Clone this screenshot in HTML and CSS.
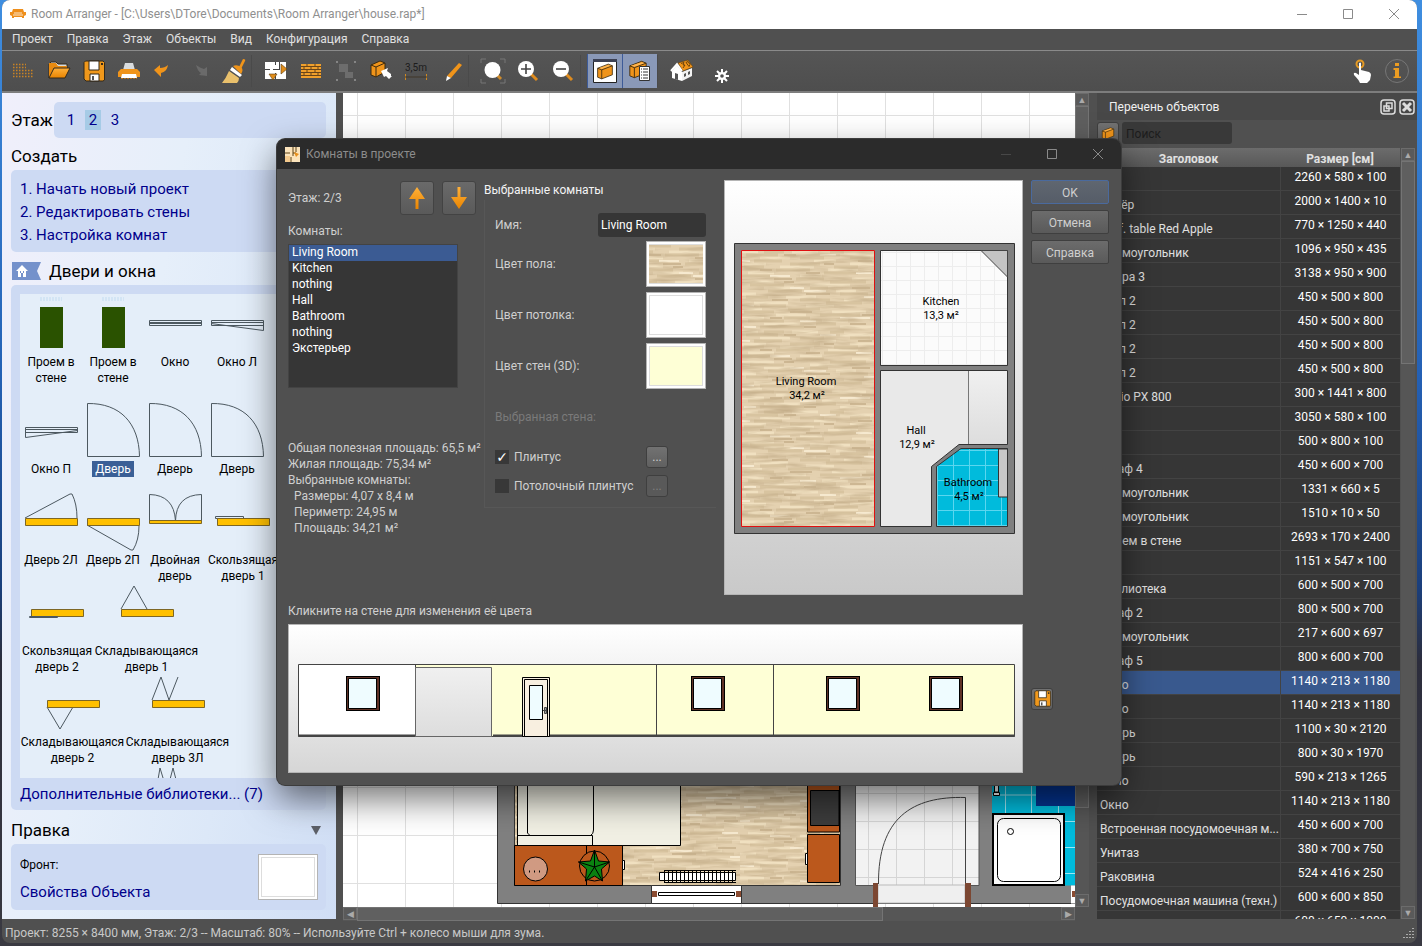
FILE: index.html
```html
<!DOCTYPE html>
<html lang="ru">
<head>
  <meta charset="UTF-8">
  <meta name="viewport" content="width=device-width, initial-scale=1.0">
  <title>Room Arranger</title>
  <link rel="stylesheet" href="styles.css">
</head>
<body>
  <!-- shared patterns and icons -->
  <svg class="defs" width="0" height="0" aria-hidden="true">
    <defs>
      <pattern id="parquet" width="134" height="80" patternUnits="userSpaceOnUse" patternTransform="translate(740 250)">
        <rect width="134" height="80" fill="#e4d1b0"/>
        <g fill="none" stroke-width="3">
          <path stroke="#f0e0c0" d="M0 2h18M52 2h26M100 5h34M20 8h30M74 11h22M0 14h26M110 14h24M40 17h34M88 20h30M8 23h26M60 26h22M112 29h22M0 32h34M70 35h40M24 38h30M96 41h20M0 44h16M46 47h30M104 50h30M14 53h34M66 56h28M0 59h22M92 62h34M36 65h30M0 68h24M82 71h26M24 74h36M100 77h34"/>
          <path stroke="#d8c4a0" d="M24 2h20M90 2h14M6 5h32M60 8h24M110 8h20M14 11h28M50 14h30M4 17h20M94 17h24M36 20h34M84 23h34M0 26h30M56 29h28M90 32h36M10 35h34M70 38h18M28 41h34M100 44h28M6 47h22M60 50h30M86 53h36M20 56h26M48 59h32M4 62h30M80 65h40M44 68h26M8 71h36M76 74h20M20 77h44"/>
          <path stroke="#cdb793" stroke-width="2" d="M44 5h12M118 11h14M84 14h10M20 20h12M66 23h14M34 29h18M44 32h10M112 38h18M66 44h24M32 50h16M50 62h22M122 65h12M30 68h12M110 74h16M64 77h12"/>
          <path stroke="#f6e9cf" stroke-width="2" d="M80 5h16M0 11h10M30 26h20M116 23h16M50 38h14M64 41h22M124 47h10M0 56h14M100 68h30M60 71h16M4 77h12"/>
        </g>
      </pattern>
      <filter id="grain" x="0" y="0" width="1" height="1">
        <feTurbulence type="fractalNoise" baseFrequency=".025 .22" numOctaves="3" seed="4"/>
        <feColorMatrix values="0 0 0 0 .56  0 0 0 0 .43  0 0 0 0 .26  2.200 0 0 0 -.95"/>
      </filter>
      <pattern id="tiles" width="28" height="28" patternUnits="userSpaceOnUse" patternTransform="translate(868 821)">
        <path d="M0 .5h28M.5 0v28" stroke="#d5d5d5" fill="none"/>
      </pattern>
      <pattern id="fineTiles" width="14" height="14" patternUnits="userSpaceOnUse" patternTransform="translate(882 252)">
        <path d="M0 .5h14M.5 0v14" stroke="#ededed" fill="none"/>
      </pattern>
      <pattern id="blueTiles" width="16" height="15" patternUnits="userSpaceOnUse" patternTransform="translate(937 450)">
        <path d="M0 .5h16M.5 0v15" stroke="#5ad6ef" fill="none"/>
      </pattern>
      <pattern id="paper" width="48" height="48" patternUnits="userSpaceOnUse" patternTransform="translate(357 115)">
        <path d="M0 .5h48M.5 0v48" stroke="#e0e0e0" fill="none"/>
      </pattern>
      <linearGradient id="fade" x1="0" y1="0" x2="0" y2="1">
        <stop offset="0" stop-color="#f0f0f0"/><stop offset="1" stop-color="#dddddd"/>
      </linearGradient>
      <linearGradient id="orange" x1="0" y1="0" x2="0" y2="1">
        <stop offset="0" stop-color="#ffb13a"/><stop offset="1" stop-color="#e98400"/>
      </linearGradient>
      <symbol id="floppy" viewBox="0 0 22 22">
        <path d="M1 2.500 2.500 1H20l1.500 1.500V20L20 21H3l-2-2z" fill="#f0981b" stroke="#33291a"/>
        <path d="M6 1h10v9H6z" fill="#fff" stroke="#33291a"/>
        <path d="M7 14h9v7H7z" fill="#fff" stroke="#33291a"/>
        <path d="M9 16h2v4H9z" fill="#555"/><path d="M18 3h2v2h-2z" fill="#33291a"/>
      </symbol>
      <symbol id="box" viewBox="0 0 22 20">
        <path d="M2 6 15 1l5 2v11L7 19l-5-2z" fill="#f0941a" stroke="#3b2a10"/>
        <path d="M3 6 15 2l4 1.200L7 7z" fill="#ffb650"/>
        <path d="M2 6l5 2 13-5M7 8v11" fill="none" stroke="#3b2a10"/>
      </symbol>
      <symbol id="pane" viewBox="0 0 34 35">
        <path d="M0 0h34v35H0z" fill="#000"/><path d="M1 1h32v33H1z" fill="#5f3126"/>
        <path d="M2.500 2.500h28v30h-28z" fill="#effcff" stroke="#000"/>
      </symbol>
    </defs>
  </svg>

  <div class="app">
    <header class="titlebar">
      <svg class="app-icon" width="16" height="12" viewBox="0 0 16 12"><path d="M3 1h10l1 3h2v3l-2 1v2h-2V9H4v1H2V8L0 7V4h2z" fill="#ee8f1c"/><path d="M4 5h8M3 7h10" stroke="#fff" stroke-width=".8"/></svg>
      <span class="title">Room Arranger - [C:\Users\DTore\Documents\Room Arranger\house.rap*]</span>
      <div class="window-controls">
        <button aria-label="Свернуть"><svg width="12" height="12" viewBox="0 0 12 12"><path d="M1 6.500h10"/></svg></button>
        <button aria-label="Развернуть"><svg width="12" height="12" viewBox="0 0 12 12"><path d="M1.500 1.500h9v9h-9z"/></svg></button>
        <button aria-label="Закрыть"><svg width="12" height="12" viewBox="0 0 12 12"><path d="M1 1l10 10M11 1 1 11"/></svg></button>
      </div>
    </header>

    <nav class="menubar">
      <button>Проект</button>
      <button>Правка</button>
      <button>Этаж</button>
      <button>Объекты</button>
      <button>Вид</button>
      <button>Конфигурация</button>
      <button>Справка</button>
    </nav>

    <div class="toolbar">
      <button class="tool" aria-label="Новый"><svg width="24" height="20" viewBox="0 0 24 20"><path d="M1 3.500h13M1 6.500h13M1 9.500h21M1 12.500h21M1 15.500h21" stroke="#c98324" stroke-width="1.500" stroke-dasharray="1.500 1.500"/></svg></button>
      <button class="tool" aria-label="Открыть"><svg width="24" height="20" viewBox="0 0 24 20"><path d="M2 17V3l2-2h5l2 2h9v4" fill="#d8dde0" stroke="#33291a"/><path d="M2 17V2h7l2 3h9v2H8z" fill="#e88a10"/><path d="M7 7h16l-5 10H2z" fill="url(#orange)" stroke="#33291a"/></svg></button>
      <button class="tool" aria-label="Сохранить"><svg width="22" height="22"><use href="#floppy"/></svg></button>
      <button class="tool" aria-label="Печать"><svg width="24" height="20" viewBox="0 0 24 20"><path d="M8 2h8l2 7H6z" fill="#d9dcde"/><path d="M4 8h16l3 3v5H1v-5z" fill="#f0941a"/><path d="M5 13h14l1 4H4z" fill="#fff"/><path d="M4 17.500h16" stroke="#b77018" stroke-dasharray="2 1"/></svg></button>
      <button class="tool undo" aria-label="Отменить"><svg width="16" height="14" viewBox="0 0 16 14"><path d="M1 6l6-5v3c3 0 6-1 8-3-1 5-3 7-7 8v4z" fill="#f0941a"/></svg></button>
      <button class="tool" aria-label="Вернуть"><svg width="22" height="20" viewBox="0 0 22 20"><path d="M19 15V6l-3 2c-3-1-5-2-8-4 1 4 3 7 5 8l-2 2z" fill="#6a6a6a"/></svg></button>
      <button class="tool" aria-label="Кисть"><svg width="26" height="26" viewBox="0 0 26 26"><path d="M18 9l4-8q3 0 2 2l-4 8z" fill="#f0941a"/><path d="M12 8q4-2 8 1 3 3 0 7z" fill="#f0941a"/><path d="M11 9l10 8-2 2-10-7z" fill="#fff"/><path d="M8 13l10 7q0 3-2 5H1q4-5 7-12z" fill="#e9c06c"/></svg></button>
      <span class="separator"></span>
      <button class="tool" aria-label="Комнаты"><svg width="24" height="22" viewBox="0 0 24 22"><path d="M1 2h21v17H1z" fill="#fff"/><path d="M1 9.500h5m3 0h6M11.500 2v3m0 8v6M15.500 2v8" stroke="#444"/><path d="M17 4l6 5-6 5z M5 14h8l-4 6z" fill="#e18d1a" stroke="#5b3e12" stroke-width=".6"/></svg></button>
      <button class="tool" aria-label="Стены"><svg width="20" height="14" viewBox="0 0 20 14"><path d="M0 0h20v14H0z" fill="#f0a02c"/><path d="M0 2.500h20M0 5.500h20M0 8.500h20M0 11.500h20M6 0v3M14 0v3M3 3v3M10 3v3M17 3v3M6 6v3M14 6v3M3 9v3M10 9v3M17 9v3" stroke="#69451a"/></svg></button>
      <button class="tool" aria-label="Выделение"><svg width="22" height="22" viewBox="0 0 22 22"><path d="M4 4h9v8h5v6h-8v-6H4z" fill="#6d6d6d"/><path d="M1 1h2v2H1zM19 1h2v2h-2zM1 19h2v2H1zM19 19h2v2h-2z" fill="#858585"/></svg></button>
      <button class="tool" aria-label="Переместить"><svg width="24" height="22" viewBox="0 0 24 22"><path d="M2 5 11 1l5 2v9l-9 5-5-2z" fill="#f0941a" stroke="#3b2a10"/><path d="M2 5l5 2 9-4M7 7v10" fill="none" stroke="#3b2a10"/><path d="M12 11l7-3-1 3 4 3v2h1l-3 3-3-3-2 1z" fill="#fff"/></svg></button>
      <button class="tool" aria-label="Размер"><svg width="24" height="20" viewBox="0 0 24 20"><text x="1" y="10" class="tool-text">3,5m</text><path d="M1.500 13v6M22.500 13v6" stroke="#d08a22"/><path d="M1 16h22" stroke="#413629"/></svg></button>
      <button class="tool pencil" aria-label="Карандаш"><svg width="22" height="20" viewBox="0 0 22 20"><path d="M5 15 17 2l3 2L9 17z" fill="#f0941a"/><path d="M5 15l4 2-5 3z" fill="#fff"/></svg></button>
      <span class="separator"></span>
      <button class="tool" aria-label="Показать всё"><svg width="26" height="26" viewBox="0 0 26 26"><path d="M1 5V1h5M20 1h5v4M1 21v4h5M20 25h5v-4" fill="none" stroke="#777"/><path d="M17 17l4 4" stroke="#cf8b2b" stroke-width="3"/><circle cx="12.500" cy="12" r="8" fill="#fff"/></svg></button>
      <button class="tool" aria-label="Увеличить"><svg width="22" height="22" viewBox="0 0 22 22"><path d="M14 14l6 6" stroke="#df8c1f" stroke-width="3"/><circle cx="9" cy="9" r="8" fill="#fff"/><path d="M4 9h10M9 4v10" stroke="#444" stroke-width="1.600"/></svg></button>
      <button class="tool" aria-label="Уменьшить"><svg width="22" height="22" viewBox="0 0 22 22"><path d="M14 14l6 6" stroke="#df8c1f" stroke-width="3"/><circle cx="9" cy="9" r="8" fill="#fff"/><path d="M4 9h10" stroke="#444" stroke-width="1.600"/></svg></button>
      <span class="separator"></span>
      <button class="tool active" aria-label="Объект"><svg width="24" height="24" viewBox="0 0 24 24"><path d="M.5 2.500h23v21H.5z" fill="#fff" stroke="#222"/><path d="M0 0h24v3H0z" fill="#3c4154"/><use href="#box" x="3" y="4" width="18" height="17"/></svg></button>
      <button class="tool active" aria-label="Перечень"><svg width="24" height="22" viewBox="0 0 24 22"><use href="#box" x="0" y="0" width="20" height="19"/><path d="M11.500 6.500h10v14h-10z" fill="#fff" stroke="#333"/><path d="M13 9h1m1 0h5M13 12h1m1 0h5M13 15h1m1 0h5M13 18h1m1 0h5" stroke="#333"/></svg></button>
      <span class="separator"></span>
      <button class="tool" aria-label="3D"><svg width="24" height="24" viewBox="0 0 24 24"><path d="M2 12 7 6l5 7v9L2 19z" fill="#fff"/><path d="M12 13l10-4v8l-10 5z" fill="#f2f2f2"/><path d="M8 4l10-3 5 7-10 4z" fill="#f0941a" stroke="#5b3e12" stroke-width=".6"/><path d="M1 12l6-7 5 7" fill="none" stroke="#fff" stroke-width="2"/><path d="M5 14l3 1v6l-3-1zM14 15l2-1v3l-2 1zM18 13l2-1v3l-2 1z" fill="#555"/><path d="M11 4.500l3-1-1 2.500 2 0-2 3M16 3.500l3 4 1-2-2-3z" stroke="#4a300a" stroke-width=".8" fill="none"/></svg></button>
      <button class="tool settings" aria-label="Настройки"><svg width="14" height="14" viewBox="0 0 14 14"><path d="M7 0v14M0 7h14M2 2l10 10M12 2 2 12" stroke="#fff" stroke-width="2"/><circle cx="7" cy="7" r="4" fill="#fff"/><circle cx="7" cy="7" r="1.800" fill="#505050"/></svg></button>
      <span class="spacer"></span>
      <button class="tool" aria-label="Касание"><svg width="22" height="24" viewBox="0 0 22 24"><circle cx="9" cy="5" r="3.500" fill="none" stroke="#e59a24" stroke-width="2"/><path d="M8 4q1.500-1 2 0v7l8 2q2 1 2 3l-1 5-3 3H9q-1-3-6-8-1-3 2-2l3 2z" fill="#fff"/></svg></button>
      <button class="tool" aria-label="Информация"><svg width="24" height="24" viewBox="0 0 24 24"><circle cx="12" cy="12" r="11.500" fill="none" stroke="#777"/><path d="M10 4h4v3h-4zM8.500 9H14v8.500h2V19H8.500v-1.500H10V11H8.500z" fill="#eb9c22"/></svg></button>
    </div>

    <main class="workspace">
      <aside class="sidebar">
        <div class="floors">
          <h2>Этаж</h2>
          <div class="panel floor-links"><a href="#">1</a><a href="#" class="current">2</a><a href="#">3</a></div>
        </div>

        <h2>Создать</h2>
        <ol class="panel steps">
          <li><a href="#">1. Начать новый проект</a></li>
          <li><a href="#">2. Редактировать стены</a></li>
          <li><a href="#">3. Настройка комнат</a></li>
        </ol>

        <div class="library-title">
          <svg width="30" height="18" viewBox="0 0 30 18"><path d="M1 0h29l-4 9 4 9H1z" fill="#7491cb"/><path d="M5 9l6-6 6 6h-2v6h-3v-4h-2v4H7V9z" fill="#fff"/><path d="M9 9h1v2H9zM12 9h1v2h-1z" fill="#7491cb"/></svg>
          <h2>Двери и окна</h2>
        </div>
        <div class="panel library">
          <div class="items">
            <div class="item tall"><svg class="thumb" viewBox="0 0 54 54"><path class="opening-top" d="M16 2h22M16 4h22"/><path class="opening" d="M16 11h23v41H16z"/></svg>Проем в стене</div>
            <div class="item tall"><svg class="thumb" viewBox="0 0 54 54"><path class="opening-top" d="M16 2h22M16 4h22"/><path class="opening" d="M16 11h23v41H16z"/></svg>Проем в стене</div>
            <div class="item tall"><svg class="thumb" viewBox="0 0 54 54"><path d="M1.500 24.500h52v5h-52zM1 26.500h52M1 27.500h52"/></svg>Окно</div>
            <div class="item tall"><svg class="thumb" viewBox="0 0 54 54"><path d="M1.500 24.500h52v5h-52zM1 26.500h52.500v8L1 27.500"/></svg>Окно Л</div>
            <div class="item"><svg class="thumb" viewBox="0 0 54 54"><path d="M1.500 24.500h52v5h-52zM53 26.500H1.500v8l52-7"/></svg>Окно П</div>
            <div class="item"><svg class="thumb" viewBox="0 0 54 54"><path d="M1.500 53.500v-53C34 0 53 20 53.500 53.500z"/></svg><span class="picked">Дверь</span></div>
            <div class="item"><svg class="thumb" viewBox="0 0 54 54"><path d="M1.500 53.500v-53C34 0 53 20 53.500 53.500z"/></svg>Дверь</div>
            <div class="item"><svg class="thumb" viewBox="0 0 54 54"><path d="M1.500 53.500v-53C34 0 53 20 53.500 53.500z"/></svg>Дверь</div>
            <div class="item"><svg class="thumb" viewBox="0 0 54 54"><path d="M1 24 46 0h2Q53 10 53 24"/><path class="leaf" d="M1.500 24.500h52v7h-52z"/></svg>Дверь 2Л</div>
            <div class="item"><svg class="thumb" viewBox="0 0 54 54"><path d="M1 31l44 25h2q6-10 6-24"/><path class="leaf" d="M1.500 24.500h52v7h-52z"/></svg>Дверь 2П</div>
            <div class="item"><svg class="thumb" viewBox="0 0 54 54"><path d="M1.500 27V.5Q26 1 27.500 27 28 1 53.500.5V27"/><path class="leaf" d="M1.500 26.500h52v3h-52z"/></svg>Двойная дверь</div>
            <div class="item wide"><svg class="thumb" viewBox="0 0 54 54"><path d="M-.5 22.500h28v2h-28z"/><path class="leaf" d="M1.500 24.500h52v7h-52z"/></svg>Скользящая дверь 1</div>
            <div class="item wide"><svg class="thumb" viewBox="0 0 54 54"><path class="leaf" d="M1.500 24.500h52v7h-52z"/><path d="M-.5 31.500h28v1h-28z"/></svg>Скользящая дверь 2</div>
            <div class="item wider"><svg class="thumb" viewBox="0 0 54 54"><path d="M1 24 14 1l13 23"/><path class="leaf" d="M1.500 24.500h52v7h-52z"/></svg>Складывающаяся дверь 1</div>
            <div class="item wider"><svg class="thumb" viewBox="0 0 54 54"><path d="M1 31l13 22 13-22"/><path class="leaf" d="M1.500 24.500h52v7h-52z"/></svg>Складывающаяся дверь 2</div>
            <div class="item wider"><svg class="thumb" viewBox="0 0 54 54"><path d="M1 24 10 1l8 23L27 1"/><path class="leaf" d="M1.500 24.500h52v7h-52z"/></svg>Складывающаяся дверь 3Л</div>
            <div class="item wider"><svg class="thumb" viewBox="0 0 54 54"><path class="leaf" d="M1.500 24.500h52v7h-52z"/></svg></div>
            <div class="item wider"><svg class="thumb" viewBox="0 0 54 54"><path d="M5 24 9 1l7 23 6-23 6 23"/><path class="leaf" d="M1.500 24.500h52v7h-52z"/></svg></div>
          </div>
          <a href="#">Дополнительные библиотеки... (7)</a>
        </div>

        <div class="edit-title"><h2>Правка</h2><svg width="10" height="9" viewBox="0 0 10 9"><path d="M0 0h10L5 9z" fill="#5d6068"/></svg></div>
        <div class="panel edit">
          <div class="edit-info"><span>Фронт:</span><a href="#">Свойства Объекта</a></div>
          <button class="swatch" aria-label="Фронт"></button>
        </div>
      </aside>

      <section class="canvas">
        <div class="drawing">
          <svg width="732" height="814" viewBox="343 93 732 814">
            <rect x="343" y="93" width="732" height="814" fill="#fff"/>
            <rect x="343" y="93" width="732" height="814" fill="url(#paper)"/>
            <path d="M497.500 300H1080V903.500H497.500z" fill="#808080" stroke="#333"/>
            <path d="M514.500 300h326v585.500h-326z" fill="url(#parquet)" stroke="#333"/>
            <rect x="515" y="760" width="325" height="125" filter="url(#grain)"/>
            <path d="M855.500 300h123.500v585.500h-123.500z" fill="#f2f2f2"/>
            <path d="M855.500 300h123.500v585.500h-123.500z" fill="url(#tiles)" stroke="#555"/>
            <path d="M992 300h84v585.500h-84z" fill="#00bbdc"/>
            <path d="M992 795h84M992 821.500h84M992 847.500h84M992 873.500h84M1005.500 700v185M1031.500 700v185M1058.500 700v185" stroke="#9fe8f5" fill="none"/>
            <!-- bed -->
            <g stroke="#000" fill="#f1f0e4">
              <path d="M517.500 700h163v145.500h-163z"/>
              <path d="M517.500 835.500h75v10M527.500 700v133l2 2M593.500 700v130q0 4-3 5.500" fill="none"/>
            </g>
            <!-- cabinets -->
            <g stroke="#000">
              <path d="M514.500 845.500h108v40h-108z" fill="#bb581c"/>
              <path d="M586.500 846v39"/>
              <path d="M622.500 860.500h2v9h-2z" fill="#fff"/>
              <circle cx="535.500" cy="869" r="12" fill="#d09a82"/>
              <path d="M529 871.500h1m4 0h1m4 0h1" stroke-width="2"/>
              <circle cx="594.500" cy="866" r="15" fill="#bb581c"/>
              <path d="M594.500 850l4 11 11 1-8 7 1 12-8-5-9 5 1-12-8-7 12-1z" fill="#0a8210"/>
              <path d="M594.500 850v17l15-5M594.500 867l8 14M594.500 867l-9 14M594.500 867l-16-5" fill="none"/>
              <path d="M807.500 700h32v132h-32z" fill="#bb581c"/>
              <path d="M810.500 790.500h28.500v35h-28.500z" fill="#3c3c3c"/>
              <path d="M807.500 834.500h32v48h-32z" fill="#bb581c"/>
              <path d="M805.500 853.500h2v11h-2z" fill="#fff"/>
            </g>
            <!-- radiator and window -->
            <path d="M651.500 885.500h90v18h-90z" fill="#fff" stroke="#333"/>
            <path d="M659.500 872.500h76v8h-76z" fill="#fff" stroke="#000"/>
            <path d="M664 876.500h72" stroke="#000" stroke-width="13" stroke-dasharray="1 3"/>
            <path d="M664 870.500h72M664 882.500h72" stroke="#000"/>
            <path d="M652 891h5v6h-5zM736 891h5v6h-5z" fill="#8b4c32"/>
            <path d="M658.500 892.500h76v3h-76z" fill="#fff" stroke="#000"/>
            <!-- entrance door -->
            <path d="M878 885h87v18h-87z" fill="#efefef" stroke="#bbb"/>
            <path d="M965.500 884V797.500C912 796 878 818 878.500 884" fill="none" stroke="#444"/>
            <path d="M873 883h5v24h-5zM965 883h6v24h-6z" fill="#7c4732"/>
            <!-- bathroom -->
            <path d="M1036 700h40v106h-40z" fill="#04338f"/>
            <path d="M994.500 780h4v12h-4zM993.500 792.500h6v3h-6z" fill="#fff" stroke="#000"/>
            <path d="M993 814h71v71h-71z" fill="#fafafa" stroke="#000" stroke-width="2"/>
            <rect x="997.500" y="818.500" width="63" height="63" rx="6" fill="#fff" stroke="#000"/>
            <circle cx="1010.500" cy="831.500" r="3" fill="#fff" stroke="#000"/>
            <path d="M1071 885.500h5v18h-5z" fill="#fff"/><path d="M1072 891h4v6h-4z" fill="#8b4c32"/>
          </svg>
        </div>
        <div class="vscroll"><span class="arrow">▲</span><span class="thumb-y"></span><span class="arrow">▼</span></div>
        <div class="hscroll"><span class="arrow">◀</span><span class="thumb-x"></span><span class="arrow">▶</span></div>
      </section>

      <section class="dock">
        <div class="dock-title">
          <span>Перечень объектов</span>
          <button aria-label="Открепить"><svg width="16" height="16" viewBox="0 0 16 16"><rect x="1" y="1" width="14" height="14" rx="3"/><path d="M6.500 4h5.500v5.500H6.500zM4 7h5v5H4z"/></svg></button>
          <button aria-label="Закрыть панель"><svg width="16" height="16" viewBox="0 0 16 16"><rect x="1" y="1" width="14" height="14" rx="3"/><path d="M4 4l8 8M12 4l-8 8" stroke-width="3"/></svg></button>
        </div>
        <div class="search">
          <button class="small-button" aria-label="Фильтр"><svg width="14" height="13"><use href="#box"/></svg></button>
          <input type="text" placeholder="Поиск" aria-label="Поиск">
        </div>
        <div class="object-list">
          <div class="rows">
            <table>
              <thead><tr><th class="name-col">Заголовок</th><th>Размер [см]</th></tr></thead>
              <tbody>
                <tr><td></td><td>2260 × 580 × 100</td></tr>
                <tr><td>Ковёр</td><td>2000 × 1400 × 10</td></tr>
                <tr><td>Coff. table Red Apple</td><td>770 × 1250 × 440</td></tr>
                <tr><td>Прямоугольник</td><td>1096 × 950 × 435</td></tr>
                <tr><td>Опора 3</td><td>3138 × 950 × 900</td></tr>
                <tr><td>Стул 2</td><td>450 × 500 × 800</td></tr>
                <tr><td>Стул 2</td><td>450 × 500 × 800</td></tr>
                <tr><td>Стул 2</td><td>450 × 500 × 800</td></tr>
                <tr><td>Стул 2</td><td>450 × 500 × 800</td></tr>
                <tr><td>Casio PX 800</td><td>300 × 1441 × 800</td></tr>
                <tr><td></td><td>3050 × 580 × 100</td></tr>
                <tr><td></td><td>500 × 800 × 100</td></tr>
                <tr><td>Шкаф 4</td><td>450 × 600 × 700</td></tr>
                <tr><td>Прямоугольник</td><td>1331 × 660 × 5</td></tr>
                <tr><td>Прямоугольник</td><td>1510 × 10 × 50</td></tr>
                <tr><td>Проем в стене</td><td>2693 × 170 × 2400</td></tr>
                <tr><td></td><td>1151 × 547 × 100</td></tr>
                <tr><td>Библиотека</td><td>600 × 500 × 700</td></tr>
                <tr><td>Шкаф 2</td><td>800 × 500 × 700</td></tr>
                <tr><td>Прямоугольник</td><td>217 × 600 × 697</td></tr>
                <tr><td>Шкаф 5</td><td>800 × 600 × 700</td></tr>
                <tr class="selected"><td>Окно</td><td>1140 × 213 × 1180</td></tr>
                <tr><td>Окно</td><td>1140 × 213 × 1180</td></tr>
                <tr><td>Дверь</td><td>1100 × 30 × 2120</td></tr>
                <tr><td>Дверь</td><td>800 × 30 × 1970</td></tr>
                <tr><td>Окно</td><td>590 × 213 × 1265</td></tr>
                <tr><td>Окно</td><td>1140 × 213 × 1180</td></tr>
                <tr><td>Встроенная посудомоечная м...</td><td>450 × 600 × 700</td></tr>
                <tr><td>Унитаз</td><td>380 × 700 × 750</td></tr>
                <tr><td>Раковина</td><td>524 × 416 × 250</td></tr>
                <tr><td>Посудомоечная машина (техн.)</td><td>600 × 600 × 850</td></tr>
                <tr><td></td><td>600 × 650 × 1000</td></tr>
              </tbody>
            </table>
          </div>
          <div class="vscroll list-scroll"><span class="arrow">▲</span><span class="thumb-y"></span><span class="arrow">▼</span></div>
        </div>
      </section>
    </main>

    <footer class="statusbar">
      <span>Проект: 8255 × 8400 мм, Этаж: 2/3 -- Масштаб: 80% -- Используйте Ctrl + колесо мыши для зума.</span>
      <svg width="12" height="12" viewBox="0 0 12 12"><path d="M10 1v1M7 4v1M10 4v1M4 7v1M7 7v1M10 7v1M1 10v1M4 10v1M7 10v1M10 10v1" stroke="#aaa" stroke-width="2"/></svg>
    </footer>
  </div>

  <div class="dialog" role="dialog" aria-label="Комнаты в проекте">
    <header class="dialog-title">
      <svg width="15" height="15" viewBox="0 0 15 15"><path d="M0 0h15v15H0z" fill="#fbe3bb"/><path d="M0 6h5m3 0h3M8 0v9M11 0v5M6 10v5" stroke="#5d4217"/><path d="M9 5l5 2-3 3z" fill="#e8901c"/><path d="M0 9h5v6H0z" fill="#f3c98c"/></svg>
      <span>Комнаты в проекте</span>
      <div class="window-controls">
        <button aria-label="Свернуть" disabled><svg width="12" height="12" viewBox="0 0 12 12"><path d="M1 6.500h10"/></svg></button>
        <button aria-label="Развернуть"><svg width="12" height="12" viewBox="0 0 12 12"><path d="M1.500 1.500h9v9h-9z"/></svg></button>
        <button aria-label="Закрыть"><svg width="12" height="12" viewBox="0 0 12 12"><path d="M1 1l10 10M11 1 1 11"/></svg></button>
      </div>
    </header>

    <div class="dialog-body">
      <div class="rooms">
        <div class="floor-row">
          <span>Этаж: 2/3</span>
          <button class="arrow-button" aria-label="Выше"><svg width="18" height="24" viewBox="0 0 18 24"><path d="M9 1l8 12H10.500v10h-3V13H1z" fill="url(#orange)"/></svg></button>
          <button class="arrow-button" aria-label="Ниже"><svg width="18" height="24" viewBox="0 0 18 24"><path d="M9 23l8-12H10.500V1h-3v10H1z" fill="url(#orange)"/></svg></button>
        </div>
        <label for="rooms">Комнаты:</label>
        <select id="rooms" size="7">
          <option selected>Living Room</option>
          <option>Kitchen</option>
          <option>nothing</option>
          <option>Hall</option>
          <option>Bathroom</option>
          <option>nothing</option>
          <option>Экстерьер</option>
        </select>
        <div class="stats">
          <p>Общая полезная площадь: 65,5 м²</p>
          <p>Жилая площадь: 75,34 м²</p>
          <p>Выбранные комнаты:</p>
          <p class="sub">Размеры: 4,07 x 8,4 м</p>
          <p class="sub">Периметр: 24,95 м</p>
          <p class="sub">Площадь: 34,21 м²</p>
        </div>
      </div>

      <div class="selected-room">
        <h3>Выбранные комнаты</h3>
        <div class="fields">
          <div class="field name-field"><label for="room-name">Имя:</label><input type="text" id="room-name" value="Living Room"></div>
          <div class="field"><label for="floor-color">Цвет пола:</label><button id="floor-color" class="swatch"><svg width="54" height="38" viewBox="760 260 54 38"><path d="M760 260h54v38h-54z" fill="url(#parquet)"/><rect x="760" y="260" width="54" height="38" filter="url(#grain)"/></svg></button></div>
          <div class="field"><label for="ceiling-color">Цвет потолка:</label><button id="ceiling-color" class="swatch"></button></div>
          <div class="field"><label for="wall-color">Цвет стен (3D):</label><button id="wall-color" class="swatch cream"></button></div>
          <div class="field muted">Выбранная стена:</div>
          <div class="check"><input type="checkbox" id="skirting" checked><label for="skirting">Плинтус</label><button class="small-button" aria-label="Параметры плинтуса">...</button></div>
          <div class="check"><input type="checkbox" id="cornice"><label for="cornice">Потолочный плинтус</label><button class="small-button" disabled aria-label="Параметры потолочного плинтуса">...</button></div>
        </div>
      </div>

      <div class="plan">
        <svg width="297" height="413" viewBox="725 181 297 413">
          <path d="M734.500 243.500h280v290h-280z" fill="#808080" stroke="#333"/>
          <path d="M741.500 250.500h133v276h-133z" fill="url(#parquet)"/>
          <rect x="741" y="250" width="134" height="277" filter="url(#grain)"/>
          <path d="M741.500 250.500h133v276h-133z" fill="none" stroke="#e01010"/>
          <path d="M880.500 250.500h127v115h-127z" fill="#fbfbfb"/>
          <path d="M880.500 250.500h127v115h-127z" fill="url(#fineTiles)" stroke="#333"/>
          <path d="M981 250.500h26.500V277z" fill="#c4c4c4" stroke="#444"/>
          <path d="M880.500 370.500h127v74H959l-27.500 22v60h-51z" fill="#e9e9e9" stroke="#333"/>
          <path d="M968.500 371h38.500v73h-38.500z" fill="url(#fade)"/><path d="M968.500 371v73" stroke="#777"/>
          <path d="M936.500 526.500v-60L961 448.500h46.500v78z" fill="#00bbdc"/>
          <path d="M936.500 526.500v-60L961 448.500h46.500v78z" fill="url(#blueTiles)" stroke="#333"/>
          <path d="M998.500 449h9v48h-9z" fill="#c8c8c8" stroke="#333"/>
          <g class="plan-text">
            <text x="806" y="385">Living Room</text><text x="807" y="399">34,2 м²</text>
            <text x="941" y="305">Kitchen</text><text x="941" y="319">13,3 м²</text>
            <text x="916" y="434">Hall</text><text x="917" y="448">12,9 м²</text>
            <text x="968" y="486">Bathroom</text><text x="969" y="500">4,5 м²</text>
          </g>
        </svg>
      </div>

      <div class="actions">
        <button class="primary">OK</button>
        <button>Отмена</button>
        <button>Справка</button>
      </div>

      <p class="hint">Кликните на стене для изменения её цвета</p>
      <div class="walls">
        <svg width="733" height="147" viewBox="289 625 733 147">
          <path d="M298.500 664.500h716v72h-716z" fill="#feffd6"/>
          <path d="M298.500 664.500h117v72h-117z" fill="#fff"/>
          <path d="M298.500 664.500h716v72h-716zM415.500 664v72M656.500 664v72M773.500 664v72" fill="none" stroke="#444"/>
          <path d="M415.500 667.500h76v69h-76z" fill="url(#fade)" stroke="#666"/>
          <path d="M298 735.500h117M493 735.500h522" stroke="#444" stroke-width="2"/>
          <use href="#pane" x="346" y="676" width="34" height="35"/>
          <use href="#pane" x="691" y="676" width="34" height="35"/>
          <use href="#pane" x="826" y="676" width="34" height="35"/>
          <use href="#pane" x="929" y="676" width="34" height="35"/>
          <g stroke="#000" fill="#f8efe0"><path d="M522.500 677.500h27v59h-27z"/><path d="M524.500 679.500h23v57h-23z"/><path d="M529.500 685.500h13v34h-13z" fill="#effcff"/><path d="M543 710.500h3M544.500 707.500h2v6h-2z" fill="#999" stroke="#444"/></g>
        </svg>
      </div>
      <button class="small-button save" aria-label="Сохранить стены"><svg width="17" height="17"><use href="#floppy"/></svg></button>
    </div>
  </div>
</body>
</html>
```
FILE: styles.css
```css
/* styles.css */
* {
  box-sizing: border-box;
}

body {
  margin: 0;
  height: 100vh;
  overflow: hidden;
  padding: 0 5px 3px 2px;
  font-family: Roboto, "Open Sans", sans-serif;
  font-size: 12px;
  line-height: 16px;
  color: #e0e0e0;
  background: linear-gradient(#3f8ee0, #2460b4 40%, #1b3f7c 62%, #2c2d3c 70%, #3a3a42);
}

button {
  font: inherit;
  color: inherit;
  border: 0;
  padding: 0;
  background: none;
  cursor: pointer;
}

input,
select {
  font: inherit;
}

a {
  color: #00008b;
  text-decoration: none;
}

h2,
h3,
p {
  margin: 0;
  font-weight: normal;
}

svg {
  display: block;
}

.defs {
  position: absolute;
}

/* main window */
.app {
  height: 100%;
  display: flex;
  flex-direction: column;
  background: #505050;
  border-radius: 8px;
  overflow: hidden;
}

.titlebar {
  height: 29px;
  display: flex;
  align-items: center;
  gap: 5px;
  padding: 0 0 2px 8px;
  background: #fff;
  color: #8f8f8f;
}

.window-controls {
  margin-left: auto;
  display: flex;
}

.window-controls button {
  width: 46px;
  display: grid;
  place-items: center;
}

.window-controls path {
  fill: none;
  stroke: #8a8a8a;
}

.window-controls button:disabled path {
  stroke: #484848;
}

.menubar {
  height: 22px;
  display: flex;
  align-items: center;
  gap: 14px;
  padding: 0 10px 1px;
  border-bottom: 1px solid #8a8a8a;
}

.toolbar {
  height: 42px;
  display: flex;
  align-items: center;
  padding: 0 3px 0 4px;
  border-bottom: 2px solid #7d7d7d;
  background: linear-gradient(#555, #4e4e4e);
}

.tool {
  width: 35px;
  height: 34px;
  display: grid;
  place-items: center;
}

.tool.active {
  background: #8a99b8;
  border-left: 1px solid #3d5b98;
}

.tool.undo {
  padding-right: 6px;
}

.tool.pencil {
  padding-left: 4px;
}

.tool.settings {
  padding: 10px 0 0 10px;
}

.tool-text {
  font-size: 10px;
  fill: #1c1c1c;
}

.separator {
  width: 7px;
  height: 32px;
  border-left: 1px solid #4a4a4a;
}

.spacer {
  flex: 1;
}

.workspace {
  flex: 1;
  min-height: 0;
  display: flex;
}

/* sidebar */
.sidebar {
  width: 334px;
  margin: 0 7px 2px 0;
  padding: 9px 10px 0 9px;
  color: #000;
  background: linear-gradient(100deg, #f0effb, #e6effa 40%, #dce8f8 70%, #d0def5);
}

.sidebar h2 {
  font-size: 17px;
  line-height: 24px;
}

.panel {
  background: #cddaf3;
  border-radius: 5px;
}

.panel a {
  font-size: 15px;
  line-height: 23px;
}

.floors {
  display: flex;
  align-items: center;
  gap: 4px;
  margin-bottom: 6px;
}

.floors h2 {
  width: 39px;
  white-space: nowrap;
}

.floor-links {
  flex: 1;
  height: 36px;
  display: flex;
  align-items: center;
  gap: 6px;
  padding-left: 9px;
}

.floor-links a {
  width: 16px;
  line-height: 20px;
  text-align: center;
}

.floor-links .current {
  background: #a6cbe6;
}

.steps {
  list-style: none;
  margin: 2px 0 7px;
  padding: 8px 9px 5px;
}

.library-title {
  display: flex;
  align-items: center;
  gap: 8px;
  margin-bottom: 2px;
}

.library {
  padding: 9px 9px 4px;
}

.items {
  height: 484px;
  overflow: hidden;
  display: flex;
  flex-wrap: wrap;
  align-content: flex-start;
  padding: 2px 17px 0 0;
  margin-bottom: 5px;
  background: #e4eef9;
}

.item {
  width: 62px;
  height: 91px;
  text-align: center;
}

.item.tall {
  height: 107px;
}

.item.wide {
  width: 74px;
}

.item.wider {
  width: 105px;
}

.thumb {
  width: 54px;
  height: 54px;
  margin: 0 auto 4px;
  overflow: visible;
}

.thumb path {
  fill: none;
  stroke: #4c5860;
}

.thumb .opening {
  fill: #2a5200;
  stroke: none;
}

.thumb .opening-top {
  stroke: #c2dcf0;
  stroke-dasharray: 2 1;
}

.thumb .leaf {
  fill: #ffc000;
  stroke: #7d6624;
}

.picked {
  display: inline-block;
  padding: 0 3px;
  background: #3a5f96;
  color: #fff;
}

.edit-title {
  display: flex;
  justify-content: space-between;
  align-items: center;
  padding: 8px 5px 2px 0;
}

.edit {
  display: flex;
  justify-content: space-between;
  align-items: center;
  height: 66px;
  padding: 0 8px 0 9px;
}

.edit-info {
  display: flex;
  flex-direction: column;
  gap: 8px;
  padding-top: 6px;
}

.swatch {
  width: 60px;
  height: 46px;
  padding: 2px;
  border: 1px solid #b4b4b4;
  background: #fff;
  box-shadow: inset 0 0 0 2px #fff, inset 0 0 0 3px #ddd;
}

.swatch.cream {
  background: #feffd6;
}

/* drawing area */
.canvas {
  flex: 1;
  min-width: 0;
  display: grid;
  grid-template: 1fr 14px / 1fr 14px;
}

.drawing {
  min-width: 0;
  min-height: 0;
  overflow: hidden;
  background: #fff;
}

.vscroll,
.hscroll {
  display: flex;
  background: #565656;
}

.vscroll {
  flex-direction: column;
}

.arrow {
  width: 14px;
  height: 13px;
  font-size: 9px;
  line-height: 12px;
  text-align: center;
  color: #aaa;
  border: 1px solid #6c6c6c;
  background: #5a5a5a;
}

.thumb-y {
  margin-bottom: auto;
  height: 702px;
  border: 1px solid #747474;
  background: #5f5f5f;
}

.thumb-x {
  margin-right: auto;
  width: 526px;
  border: 1px solid #747474;
  background: #606060;
}

/* object list */
.dock {
  width: 322px;
  margin-left: 6px;
  padding: 0 0 2px 2px;
  display: flex;
  flex-direction: column;
  background: #505050;
}

.dock-title {
  height: 27px;
  display: flex;
  align-items: center;
  gap: 3px;
  padding: 0 2px 0 12px;
  background: #484848;
  color: #f0f0f0;
}

.dock-title span {
  flex: 1;
}

.dock-title svg {
  fill: none;
  stroke: #ddd;
  stroke-width: 1.5;
}

.search {
  display: flex;
  gap: 3px;
  padding: 2px 0 4px;
}

.search input {
  width: 110px;
  border: 0;
  padding: 1px 4px 0;
  border-radius: 3px;
  background: #393939;
}

.search input::placeholder {
  color: #1d1d1d;
}

.small-button {
  width: 22px;
  height: 22px;
  display: grid;
  place-items: center;
  border: 1px solid #3f3f3f;
  border-radius: 3px;
  background: linear-gradient(#727272, #606060);
}

.small-button:disabled {
  color: #808080;
  background: #595959;
}

.object-list {
  flex: 1;
  min-height: 0;
  display: flex;
}

.rows {
  flex: 1;
  overflow: hidden;
  background: #363636;
}

.rows table {
  width: 100%;
  table-layout: fixed;
  border-collapse: separate;
  border-spacing: 0;
}

.rows th {
  height: 19px;
  padding: 2px 0 0;
  background: linear-gradient(#6c6c6c, #585858);
}

.name-col {
  width: 183px;
}

.rows td {
  height: 24px;
  padding: 4px 0 0 3px;
  border-bottom: 1px solid #434343;
  overflow: hidden;
  text-overflow: ellipsis;
  white-space: nowrap;
}

.rows td + td {
  padding: 0 0 3px;
  text-align: center;
  color: #fff;
  border-left: 1px solid #434343;
}

.rows .selected td {
  background: #39598e;
}

.list-scroll {
  width: 14px;
  margin: 0 2px 0 1px;
}

.list-scroll .thumb-y {
  height: 203px;
}

.statusbar {
  height: 22px;
  display: flex;
  align-items: center;
  justify-content: space-between;
  padding: 1px 2px 0 3px;
  color: #c8c8c8;
}

/* rooms dialog */
.dialog {
  position: absolute;
  left: 277px;
  top: 139px;
  width: 844px;
  border-radius: 8px;
  overflow: hidden;
  background: #505050;
  color: #cfcfcf;
  box-shadow: 0 0 0 1px #3c3c3c, 0 14px 34px rgba(0, 0, 0, 0.55);
}

.dialog-title {
  height: 30px;
  display: flex;
  align-items: center;
  gap: 6px;
  padding-left: 8px;
  background: #2b2b2b;
  color: #8c8c8c;
}

.dialog-body {
  display: grid;
  grid-template-columns: 188px 232px 299px 78px;
  column-gap: 8px;
  padding: 11px 12px 12px 11px;
}

.rooms {
  display: flex;
  flex-direction: column;
  align-items: flex-start;
  padding-top: 1px;
}

.floor-row {
  width: 188px;
  display: flex;
  align-items: center;
  gap: 8px;
  margin-bottom: 8px;
}

.floor-row span {
  flex: 1;
}

.arrow-button {
  width: 34px;
  height: 34px;
  display: grid;
  place-items: center;
  border: 1px solid #434343;
  border-radius: 3px;
  background: linear-gradient(#6a6a6a, #5a5a5a);
}

.rooms select {
  width: 170px;
  height: 144px;
  margin-top: 5px;
  padding: 0;
  border: 1px solid #434343;
  border-radius: 0;
  outline: 0;
  overflow: hidden;
  color: #fff;
  background: #363636;
}

.rooms option {
  height: 16px;
  min-height: 16px;
  padding: 0 3px;
  line-height: 16px;
}

.rooms option:checked {
  color: #fff;
  background: #3b5b93 linear-gradient(#3b5b93, #3b5b93);
}

.stats {
  margin-top: 52px;
  white-space: nowrap;
}

.stats .sub {
  padding-left: 6px;
}

.selected-room h3 {
  font-size: 12px;
  line-height: 20px;
  color: #f4f4f4;
}

.fields {
  height: 308px;
  padding: 11px 10px 0;
  border-left: 1px solid #575757;
  border-bottom: 1px solid #575757;
}

.field {
  height: 51px;
  display: flex;
  align-items: center;
  justify-content: space-between;
}

.name-field {
  height: 27px;
}

.name-field input {
  width: 108px;
  height: 24px;
  padding: 0 3px;
  border: 0;
  border-radius: 3px;
  color: #fff;
  background: #363636;
}

.muted {
  color: #7a7a7a;
}

.check {
  height: 29px;
  display: flex;
  align-items: center;
  padding-right: 38px;
}

.check label {
  flex: 1;
}

.check input {
  appearance: none;
  width: 14px;
  height: 14px;
  margin: 0 5px 0 0;
  background: #383838;
}

.check input:checked::before {
  content: "✓";
  display: block;
  font: bold 14px/14px "DejaVu Sans", sans-serif;
  text-align: center;
  color: #fff;
}

.plan,
.walls {
  border: 1px solid #b5b5b5;
  background: linear-gradient(#fff, #c9c9c9);
}

.plan {
  height: 415px;
}

.plan-text {
  font-size: 11px;
  text-anchor: middle;
  fill: #000;
}

.actions {
  display: flex;
  flex-direction: column;
  gap: 6px;
}

.actions button {
  height: 24px;
  padding-top: 2px;
  border: 1px solid #3f3f3f;
  border-radius: 2px;
  background: linear-gradient(#6c6c6c, #5a5a5a);
}

.actions .primary {
  border-color: #4a6a9e;
  background: linear-gradient(#5f6670, #565d68);
}

.hint {
  grid-column: 1 / -1;
  padding: 8px 0 5px;
}

.walls {
  grid-column: 1 / 4;
  height: 149px;
  background: linear-gradient(#fff, #d6d6d6);
}

.save {
  align-self: center;
}
```
